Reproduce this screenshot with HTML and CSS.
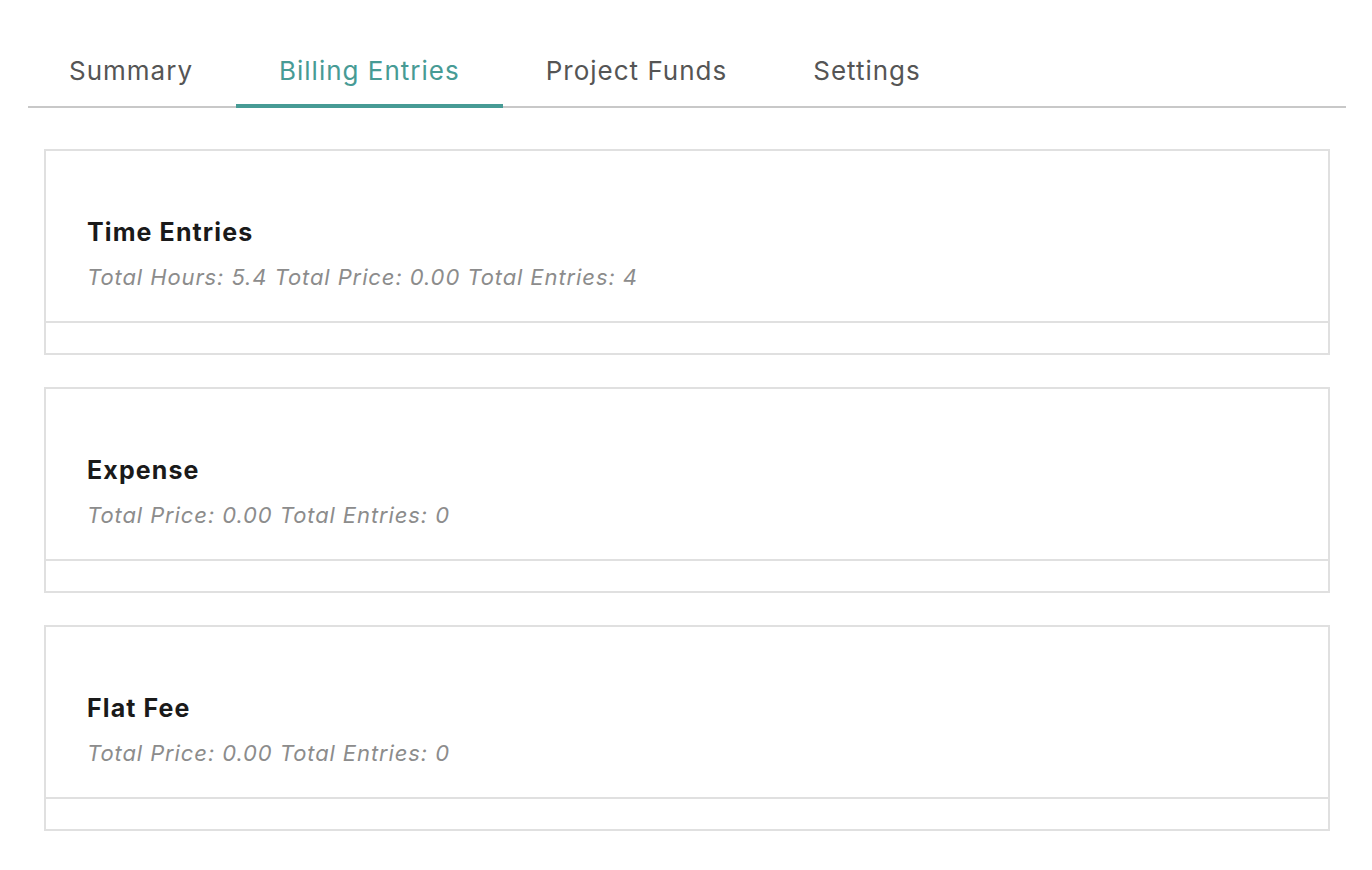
FILE: index.html
```html
<!DOCTYPE html>
<html lang="en">
<head>
  <meta charset="UTF-8">
  <meta name="viewport" content="width=device-width, initial-scale=1.0">
  <title>Billing Entries</title>
  <link rel="stylesheet" href="styles.css">
</head>
<body>

<div class="page">
  <nav class="tabs">
    <a class="tab" href="#">Summary</a>
    <a class="tab active" href="#">Billing Entries</a>
    <a class="tab" href="#">Project Funds</a>
    <a class="tab" href="#">Settings</a>
  </nav>

  <div class="cards">
    <div class="card">
      <div class="card-body">
        <h2 class="card-title">Time Entries</h2>
        <p class="card-meta">Total Hours: 5.4 Total Price: 0.00 Total Entries: 4</p>
      </div>
      <div class="card-footer"></div>
    </div>

    <div class="card">
      <div class="card-body">
        <h2 class="card-title">Expense</h2>
        <p class="card-meta">Total Price: 0.00 Total Entries: 0</p>
      </div>
      <div class="card-footer"></div>
    </div>

    <div class="card">
      <div class="card-body">
        <h2 class="card-title">Flat Fee</h2>
        <p class="card-meta">Total Price: 0.00 Total Entries: 0</p>
      </div>
      <div class="card-footer"></div>
    </div>
  </div>
</div>

</body>
</html>
```

FILE: styles.css
```css
body {
  margin: 0;
  padding: 0;
  background-color: #fff;
  font-family: Inter, 'Liberation Sans', Arial, sans-serif;
}

.page {
  padding: 40px 26px 0 28px;
}

.tabs {
  display: flex;
  border-bottom: 2px solid #c8c8c8;
}

.tab {
  display: block;
  padding: 15px 43px 18px;
  margin-bottom: -2px;
  font-size: 26px;
  letter-spacing: 1px;
  color: #555;
  text-decoration: none;
  border-bottom: 4px solid transparent;
}

.tab:first-child {
  padding-left: 41px;
}

.tab.active {
  color: #479b95;
  border-bottom-color: #479b95;
}

.cards {
  display: flex;
  flex-direction: column;
  gap: 32px;
  padding: 41px 16px 0;
}

.card {
  border: 2px solid #e0e0e0;
}

.card-body {
  height: 172px;
  padding: 66px 41px 0;
  box-sizing: border-box;
  border-bottom: 2px solid #e0e0e0;
}

.card-title {
  margin: 0;
  font-size: 25px;
  letter-spacing: 1.1px;
  font-weight: 700;
  color: #1a1a1a;
}

.card-meta {
  margin: 17px 0 0;
  font-size: 22px;
  letter-spacing: 0.9px;
  font-style: italic;
  color: #8c8c8c;
}

.card-footer {
  height: 30px;
}
```
